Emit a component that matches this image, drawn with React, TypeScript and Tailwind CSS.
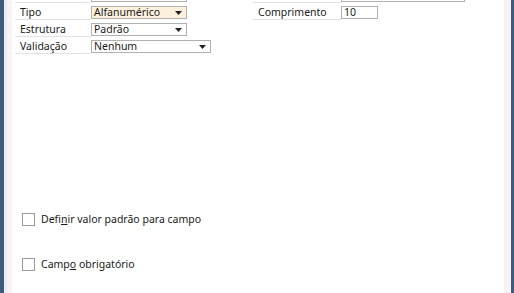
import React from 'react'

const font = { fontFamily: '"Noto Sans", "Open Sans", sans-serif' }

function Arrow() {
  return (
    <svg width="7" height="4" viewBox="0 0 7 4" className="shrink-0">
      <path d="M0 0h7L3.5 4z" fill="#222" />
    </svg>
  )
}

function Row({ label, value, width, labelWidth = 76, select, active }: { label: string; value: string; width: number; labelWidth?: number; select?: boolean; active?: boolean }) {
  return (
    <div className="flex h-[17px]">
      <div className="border-b border-[#e2e2e2] pl-[5px] leading-[16px] pt-[1px] whitespace-nowrap" style={{ width: labelWidth }}>{label}</div>
      <div
        className={`mt-[3px] h-[13px] border border-[#b0b0b0] flex items-center pl-[2px] pr-[4px] leading-[11px] ${active ? 'bg-[#fdf1de]' : 'bg-white'}`}
        style={{ width }}
      >
        <span className="flex-1">{value}</span>
        {select && <Arrow />}
      </div>
    </div>
  )
}

function Check({ pre, under, rest }: { pre: string; under: string; rest: string }) {
  return (
    <div className="flex items-center gap-[6px] pl-[10px] h-[13px]">
      <div className="w-[13px] h-[13px] border border-[#9a9a9a] bg-white" />
      <span>
        {pre}
        <span className="underline underline-offset-1">{under}</span>
        {rest}
      </span>
    </div>
  )
}

export default function App() {
  return (
    <div className="w-[514px] h-[293px] overflow-hidden flex text-[10.5px] text-[#1a1a1a]" style={font}>
      <div className="w-[4px] bg-[#3e5d7e]" />
      <div className="w-[3px] bg-[#e9eef4]" />
      <div className="w-[5px] bg-[#f8f2f6]" />
      <div className="flex-1 bg-white flex flex-col">
        <div className="flex -mt-[14px]">
          <div className="w-[241px] pl-[3px]">
            <Row label="" value="" width={96} />
            <Row label="Tipo" value="Alfanumérico" width={96} select active />
            <Row label="Estrutura" value="Padrão" width={96} select />
            <Row label="Validação" value="Nenhum" width={120} select />
          </div>
          <div>
            <Row label="" value="" width={124} labelWidth={88} />
            <Row label="Comprimento" value="10" width={37} labelWidth={88} />
          </div>
        </div>
        <div className="mt-[159px]">
          <Check pre="Defi" under="n" rest="ir valor padrão para campo" />
        </div>
        <div className="mt-[32px]">
          <Check pre="Camp" under="o" rest=" obrigatório" />
        </div>
      </div>
      <div className="w-[7px] bg-[#f7f3f5]" />
      <div className="w-[3px] bg-[#3e5d7e]" />
    </div>
  )
}
